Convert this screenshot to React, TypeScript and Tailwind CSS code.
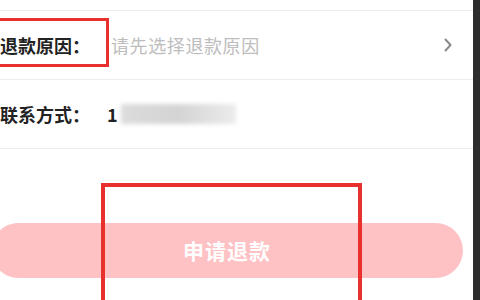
const font = { fontFamily: '"Noto Sans CJK SC", "Noto Sans", sans-serif' };

const Chevron = () => (
  <svg width="10" height="14" viewBox="0 0 10 14" fill="none">
    <path d="M2.5 1.5 L7.5 7 L2.5 12.5" stroke="#8a8a8a" strokeWidth="2" strokeLinecap="round" strokeLinejoin="round" />
  </svg>
);

const App = () => {
  return (
    <div
      className="relative flex w-[480px] h-[300px] bg-white overflow-hidden"
      style={font}
    >
      <div className="flex-1 flex flex-col pt-[10px]">
        <div className="h-[70px] flex items-center border-t border-b border-[#ececec]">
          <span className="w-[111px] text-[18px] font-semibold text-[#222]">
            退款原因：
          </span>
          <span className="flex-1 text-[18px] tracking-[0.6px] text-[#bdbdbd]">请先选择退款原因</span>
          <span className="mr-[20px] flex items-center">
            <Chevron />
          </span>
        </div>
        <div className="h-[69px] flex items-center border-b border-[#ececec]">
          <span className="w-[107px] text-[18px] font-semibold text-[#222]">
            联系方式：
          </span>
          <span className="text-[18px] font-semibold text-[#222]">1</span>
          <span className="ml-[3px] w-[115px] h-[20px] bg-gradient-to-r from-[#dcdcdc] via-[#d4d4d4] to-[#ececec] blur-[2px]" />
        </div>
        <button className="mt-[74px] -ml-[9px] w-[472px] h-[55px] rounded-full bg-[#fec1c4] text-white text-[21px] font-semibold tracking-[1px]">
          申请退款
        </button>
      </div>
      <div className="w-[7px] bg-[#2d2d2d]" />

      <div className="absolute left-[-10px] top-[18px] w-[119px] h-[49px] border-[3px] border-[#e8302e]" />
      <div className="absolute left-[101px] top-[183px] w-[261px] h-[140px] border-[4px] border-[#e8302e]" />
    </div>
  );
};

export default App;
